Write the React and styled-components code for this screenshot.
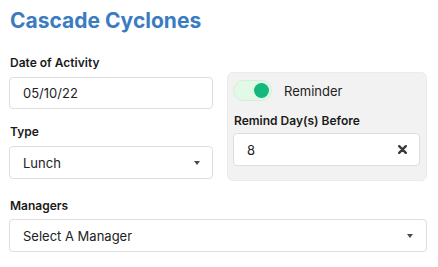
import styled, { createGlobalStyle } from 'styled-components';

const Global = createGlobalStyle`
  html, body {
    margin: 0;
    padding: 0;
    background: #ffffff;
    font-family: Inter, "Liberation Sans", sans-serif;
    color: #1f1f1f;
  }
`;

const Page = styled.div`
  width: 418px;
  padding: 7px 11px 0 9px;
`;

const Title = styled.h1`
  margin: 0 0 0 1px;
  font-size: 21px;
  line-height: 27px;
  font-weight: 700;
  color: #3b7cc1;
`;

const TopRow = styled.div`
  display: grid;
  grid-template-columns: 204px 200px;
  column-gap: 14px;
  align-items: start;
  margin-top: 21px;
`;

const Column = styled.div`
  display: flex;
  flex-direction: column;
  gap: 15px;
`;

const Field = styled.div`
  display: flex;
  flex-direction: column;
`;

const Label = styled.label`
  font-size: 12px;
  line-height: 16px;
  font-weight: 600;
  color: #1a1a1a;
  margin: 0 0 ${(p) => p.$gap || 6}px 1px;
`;

const Box = styled.div`
  box-sizing: border-box;
  height: ${(p) => p.$h || 33}px;
  display: flex;
  align-items: center;
  justify-content: space-between;
  padding: 0 12px 0 13px;
  background: #ffffff;
  border: 1px solid #dedede;
  border-radius: 4px;
  font-size: 13px;
  color: #222;
`;

const Caret = styled.span`
  width: 0;
  height: 0;
  border-left: 3.5px solid transparent;
  border-right: 3.5px solid transparent;
  border-top: 4px solid #4a4a4a;
  margin-right: ${(p) => p.$mr || 0}px;
`;

const Panel = styled.div`
  margin-top: 17px;
  background: #f2f2f2;
  border: 1px solid #ebebeb;
  border-radius: 6px;
  padding: 7px 6px 14px 5px;
  display: flex;
  flex-direction: column;
`;

const ToggleRow = styled.div`
  display: flex;
  align-items: center;
  gap: 12px;
  margin-bottom: 12px;
  font-size: 13px;
  color: #222;
`;

const Track = styled.span`
  box-sizing: border-box;
  width: 39px;
  height: 21px;
  border-radius: 11px;
  background: #e1f9e6;
  border: 1px solid #d2f0d9;
  display: flex;
  align-items: center;
  justify-content: flex-end;
  padding-right: 2px;
`;

const Knob = styled.span`
  width: 15px;
  height: 15px;
  border-radius: 50%;
  background: #12b87e;
`;

const ClearIcon = () => (
  <svg width="9" height="9" viewBox="0 0 9 9">
    <path d="M1.2 1.2 L7.8 7.8 M7.8 1.2 L1.2 7.8" stroke="#3a3a3a" strokeWidth="2.4" strokeLinecap="round" />
  </svg>
);

const Bottom = styled.div`
  margin-top: 17px;
`;

export default function App() {
  return (
    <Page>
      <Global />
      <Title>Cascade Cyclones</Title>
      <TopRow>
        <Column>
          <Field>
            <Label>Date of Activity</Label>
            <Box $h={32}>05/10/22</Box>
          </Field>
          <Field>
            <Label>Type</Label>
            <Box>
              Lunch
              <Caret />
            </Box>
          </Field>
        </Column>
        <Panel>
          <ToggleRow>
            <Track>
              <Knob />
            </Track>
            Reminder
          </ToggleRow>
          <Field>
            <Label $gap={4}>Remind Day(s) Before</Label>
            <Box>
              8
              <ClearIcon />
            </Box>
          </Field>
        </Panel>
      </TopRow>
      <Bottom>
        <Field>
          <Label $gap={5}>Managers</Label>
          <Box>
            Select A Manager
            <Caret $mr={1} />
          </Box>
        </Field>
      </Bottom>
    </Page>
  );
}
